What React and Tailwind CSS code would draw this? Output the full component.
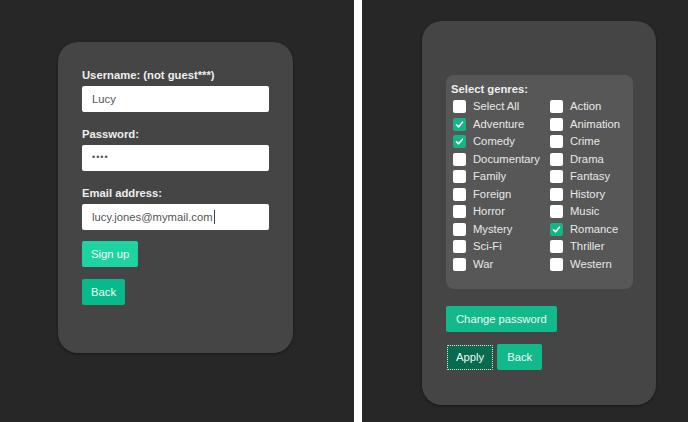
import React from 'react';

const genres = [
  ['Select All', false], ['Action', false],
  ['Adventure', true], ['Animation', false],
  ['Comedy', true], ['Crime', false],
  ['Documentary', false], ['Drama', false],
  ['Family', false], ['Fantasy', false],
  ['Foreign', false], ['History', false],
  ['Horror', false], ['Music', false],
  ['Mystery', false], ['Romance', true],
  ['Sci-Fi', false], ['Thriller', false],
  ['War', false], ['Western', false],
];

function Box({ checked }) {
  if (checked) {
    return (
      <span className="flex h-[13px] w-[13px] shrink-0 items-center justify-center rounded-[2px] bg-[#12b585]">
        <svg width="9" height="9" viewBox="0 0 9 9" fill="none">
          <polyline points="1.5,4.8 3.6,6.8 7.5,2.2" stroke="#fff" strokeWidth="1.6" strokeLinecap="round" strokeLinejoin="round" />
        </svg>
      </span>
    );
  }
  return <span className="h-[13px] w-[13px] shrink-0 rounded-[2px] bg-white" />;
}

function Field({ label, value, caret }) {
  return (
    <div className="flex flex-col">
      <span className="text-[11.25px] leading-[14px] font-bold text-[#eeeeee]">{label}</span>
      <div className="mt-1 flex h-[26px] w-[187px] items-center rounded-[2px] bg-white pl-[10px] text-[11.25px] text-[#555555]">
        {value}
        {caret && <span className="ml-[1px] h-[14px] w-px bg-[#444]" />}
      </div>
    </div>
  );
}

export default function App() {
  return (
    <div className="flex h-[422px] w-[688px] bg-[#272727] font-['Liberation_Sans',Arial,sans-serif]">
      {/* left: sign up */}
      <div className="w-[354px] pl-[58px] pt-[42px]">
        <div className="flex h-[311px] w-[235px] flex-col rounded-[20px] bg-[#454545] pl-[24px] pt-[26px] shadow-[0_1px_3px_rgba(0,0,0,0.4)]">
          <Field label="Username: (not guest***)" value="Lucy" />
          <div className="mt-[15px]">
            <Field label="Password:" value={<span className="text-[9px] tracking-[1px]">••••</span>} />
          </div>
          <div className="mt-[15px]">
            <Field label="Email address:" value="lucy.jones@mymail.com" caret />
          </div>
          <div className="mt-[11px] flex flex-col items-start gap-[12px]">
            <button className="h-[26px] rounded-[2px] bg-[#1ed3a0] px-[9px] text-[11.25px] text-[#eefaf6]">Sign up</button>
            <button className="h-[26px] rounded-[2px] bg-[#08ba8b] px-[9px] text-[11.25px] text-[#eefaf6]">Back</button>
          </div>
        </div>
      </div>

      <div className="w-[8px] bg-white" />

      {/* right: preferences */}
      <div className="flex-1 pl-[60px] pt-[21px]">
        <div className="flex h-[384px] w-[234px] flex-col rounded-[20px] bg-[#454545] pl-[24px] pt-[54px] shadow-[0_1px_3px_rgba(0,0,0,0.4)]">
          <div className="w-[187px] rounded-[8px] bg-[#575757] pb-[16px] pl-[5px] pt-[7px]">
            <div className="text-[11.25px] leading-[14px] font-bold text-[#eeeeee]">Select genres:</div>
            <div className="mt-[2px] grid grid-cols-[97px_1fr]">
              {genres.map(([name, checked]) => (
                <div key={name} className="flex h-[17.5px] items-center gap-[7px] pl-[2px] text-[11.25px] text-[#e8e8e8]">
                  <Box checked={checked} />
                  <span>{name}</span>
                </div>
              ))}
            </div>
          </div>
          <div className="mt-[17px] flex flex-col items-start gap-[12px]">
            <button className="h-[26px] rounded-[2px] bg-[#12b98a] px-[10px] text-[11.25px] text-[#eefaf6]">Change password</button>
            <div className="flex items-center gap-[4px]">
              <button className="ml-[1px] h-[25px] rounded-[1px] border border-dotted border-[#cfe9df] bg-[#086a4e] px-[8px] text-[11.25px] text-[#eefaf6]">Apply</button>
              <button className="h-[26px] rounded-[2px] bg-[#12b98a] px-[10px] text-[11.25px] text-[#eefaf6]">Back</button>
            </div>
          </div>
        </div>
      </div>
    </div>
  );
}
